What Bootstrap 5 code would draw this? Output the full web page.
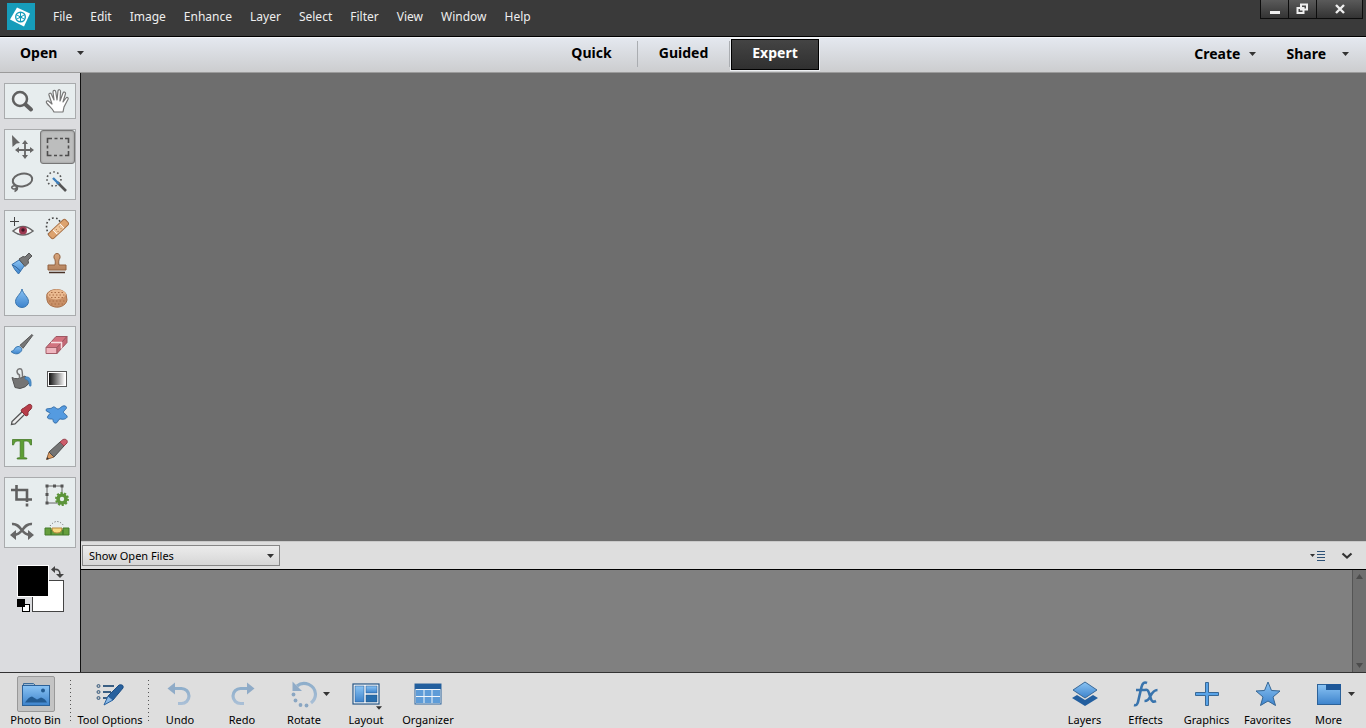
<!DOCTYPE html>
<html lang="en">
<head>
<meta charset="utf-8">
<meta name="viewport" content="width=device-width, initial-scale=1">
<title>Photo Editor</title>
<link href="https://cdn.jsdelivr.net/npm/bootstrap@5.3.0/dist/css/bootstrap.min.css" rel="stylesheet">
<style>
  body { font-family: "Noto Sans", "Open Sans", sans-serif; font-size: 11px; line-height: 16px; color: #000; background: #dedede; }
  button { border: 0; background: none; padding: 0; color: inherit; }
  svg { display: block; flex: none; }
  .titlebar { height: 37px; background: #3a3a3a; border-bottom: 1px solid #000; }
  .logo { margin: 3px 0 0 7px; }
  .menus { font-size: 12px; line-height: 18px; gap: 18px; padding: 8px 0 0 18px; }
  .menus a { color: #eee; text-decoration: none; }
  .winbtns { height: 19px; border: 1px solid #0c0c0c; border-top: 0; margin-right: 3px; }
  .winbtns button { width: 28px; background: linear-gradient(#5a5a5a, #333); border-left: 1px solid #0c0c0c; }
  .winbtns button:first-child { border-left: 0; width: 27px; }
  .winbtns button:last-child { width: 46px; }
  .modebar { height: 36px; background: linear-gradient(#e4e8ef, #cccdcf); border-top: 1px solid #f4f6f9; border-bottom: 1px solid #9b9b9b; font-size: 14px; font-weight: 700; padding-bottom: 2px; }
  .modebar .side { flex: 1 1 0; min-width: 0; }
  .open-btn { margin-left: 20px; gap: 20px; padding-bottom: 2px; }
  .create-btn { gap: 9px; margin-right: 30px; }
  .share-btn { gap: 16px; margin-right: 17px; }
  .mode { width: 92px; height: 26px; border-right: 1px solid #aaadb1; padding-bottom: 2px; }
  .mode.current { width: 88px; height: 31px; margin: 0 1px; color: #fff; background: linear-gradient(#444, #303030); border: 1px solid #000; box-shadow: 0 0 0 1px #eef0f3; }
  .toolbox { width: 81px; background: #dbdcdf; border-right: 1px solid #111; padding: 10px 4px 0; gap: 10px; }
  .toolset { display: grid; grid-template-columns: 1fr 1fr; grid-auto-rows: 34px; gap: 1px; border: 1px solid #a9abad; background: #e7edee; padding-right: 1px; }
  .toolset button { display: flex; align-items: center; justify-content: center; }
  .toolset .picked { background: #bcbdbd; border: 1px solid #777; border-radius: 3px; margin-right: -1px; box-shadow: inset 0 0 2px #888; }
  .swatches { margin: 7px 0 0 13px; }
  .canvas { background: #6e6e6e; }
  .binhead { height: 29px; background: #dedede; border-top: 1px solid #c9c9c9; border-bottom: 1px solid #000; padding: 0 13px 0 1px; }
  .files { width: 198px; height: 21px; appearance: none; border: 1px solid #868686; background: linear-gradient(#ececec, #d6d6d6); padding: 0 6px; font-size: 11px; line-height: 16px; color: #000; border-radius: 0; }
  .files-arrow { right: 6px; top: 9px; pointer-events: none; }
  .bin { height: 102px; background: #808080; }
  .scroller { width: 14px; background: #6f6f6f; border-left: 1px solid #555; padding: 4px 0; }
  .taskbar { height: 56px; background: #dedede; border-top: 1px solid #333; padding: 3px 7px 0 0; }
  .task { width: 62px; height: 52px; display: flex; flex-direction: column; align-items: center; white-space: nowrap; position: relative; }
  .task .pic { width: 38px; height: 36px; display: flex; align-items: center; justify-content: center; }
  .task.first { width: 71px; }
  .task.wide { width: 78px; }
  .task.right { width: 61px; }
  .task.on .pic { background: #c4c4c4; border: 1px solid #999; border-radius: 2px; }
  .dotted { background: repeating-linear-gradient(#555 0 1px, transparent 1px 4px) right 4px / 1px 44px no-repeat; }
  .drop { position: absolute; left: 50px; top: 16px; }
  .drop.low { left: 41px; top: 30px; }
</style>
</head>
<body class="vh-100 d-flex flex-column overflow-hidden">
<svg width="0" height="0" class="position-absolute" aria-hidden="true">
  <defs>
    <linearGradient id="blue" x2="0" y2="1"><stop stop-color="#8bc4f4"/><stop offset="1" stop-color="#3d83cc"/></linearGradient>
    <linearGradient id="pale" x2="0" y2="1"><stop stop-color="#8eaecb"/><stop offset="1" stop-color="#a9bfd6"/></linearGradient>
    <linearGradient id="ramp"><stop stop-color="#111"/><stop offset="1" stop-color="#fff"/></linearGradient>
    <linearGradient id="tan" x2="0" y2="1"><stop stop-color="#d9a67c"/><stop offset="1" stop-color="#b58460"/></linearGradient>
    <symbol id="tri" viewBox="0 0 7 4"><path d="M0 0h7L3.500 4z" fill="#333"/></symbol>
  </defs>
</svg>

<header class="titlebar d-flex align-items-start flex-shrink-0">
  <svg class="logo" width="28" height="28" viewBox="0 0 28 28"><rect width="28" height="27" fill="#169cba"/><path d="M10 4.500l13 6-6 13-14-7z" fill="#fff"/><circle cx="13.500" cy="14" r="4.800" fill="#fff" stroke="#169cba" stroke-width="1.400"/><path d="M13.500 9v10M9 11.500l9 5M18 11.500l-9 5" stroke="#169cba" stroke-width="1"/><circle cx="13.500" cy="14" r="1.500" fill="#169cba"/></svg>
  <nav class="menus d-flex flex-grow-1">
    <a href="#">File</a><a href="#">Edit</a><a href="#">Image</a><a href="#">Enhance</a><a href="#">Layer</a><a href="#">Select</a><a href="#">Filter</a><a href="#">View</a><a href="#">Window</a><a href="#">Help</a>
  </nav>
  <div class="winbtns d-flex">
    <button aria-label="Minimize"><svg class="m-auto" width="12" height="12"><path d="M1 9.500h10" stroke="#eee" stroke-width="3"/></svg></button>
    <button aria-label="Restore"><svg class="m-auto" width="13" height="12"><path d="M5 1.500h6v5H5zM1.500 5h6v5h-6z" fill="#484848" stroke="#eee" stroke-width="2"/></svg></button>
    <button aria-label="Close"><svg class="m-auto" width="12" height="12"><path d="M2 2l8 8M10 2l-8 8" stroke="#eee" stroke-width="2.400"/></svg></button>
  </div>
</header>

<div class="modebar d-flex align-items-center flex-shrink-0">
  <div class="side d-flex"><button class="open-btn d-flex align-items-center fw-bold">Open <svg width="7" height="4"><use href="#tri"/></svg></button></div>
  <div class="d-flex align-items-center">
    <button class="mode fw-bold">Quick</button><button class="mode fw-bold">Guided</button><button class="mode current fw-bold">Expert</button>
  </div>
  <div class="side d-flex justify-content-end">
    <button class="create-btn d-flex align-items-center fw-bold">Create <svg width="7" height="4"><use href="#tri"/></svg></button>
    <button class="share-btn d-flex align-items-center fw-bold">Share <svg width="7" height="4"><use href="#tri"/></svg></button>
  </div>
</div>

<main class="d-flex flex-grow-1">
  <aside class="toolbox d-flex flex-column flex-shrink-0">
    <div class="toolset">
      <button aria-label="Zoom"><svg width="24" height="24" fill="none" stroke="#606060"><circle cx="10" cy="10" r="7" fill="#eef2f3" stroke-width="2.500"/><path d="M15.500 15.500l5.500 5" stroke-width="4" stroke-linecap="round"/></svg></button>
      <button aria-label="Hand"><svg width="24" height="24"><path d="M9 23C8 20 5 18 2 14.500c-2-2.500 1-3.500 2.500-1.500l2.500 2L4 6c-.500-2 2-2.500 2.500-.500L9 11 8 3c0-2 2.500-2.200 2.800 0L12 11l1-9c.300-2 2.700-1.500 2.500.500L15 12l3-8c.600-1.800 3-1 2.400 1L18 13l3-4c1-1.500 2.700-.300 2 1.200L19 18l-1 5z" fill="#fff" stroke="#777" stroke-width="1.200" stroke-linejoin="round"/></svg></button>
    </div>
    <div class="toolset">
      <button aria-label="Move"><svg width="24" height="24"><path d="M2 0l8 8-3.500.5L2.500 12z" fill="#666"/><path d="M15 8v14M8 15h14" stroke="#666" stroke-width="1.800"/><path d="M15 5l3 4h-6zM15 24l3-4h-6zM5 15l4-3v6zM24 15l-4-3v6z" fill="#666"/></svg></button>
      <button class="picked" aria-label="Rectangular Marquee"><svg width="24" height="20"><path d="M1.500 6V1.500H6M8.500 1.500h3M14 1.500h3M19 1.500h3.500V6M22.500 8.500v3M22.500 14v4.500H19M16.500 18.500h-3M11 18.500H8M5.500 18.500h-4V14M1.500 11.500v-3" fill="none" stroke="#4d4d4d" stroke-width="1.600"/></svg></button>
      <button aria-label="Lasso"><svg width="24" height="24" fill="none" stroke="#666"><ellipse cx="12.500" cy="10" rx="9.800" ry="6.300" stroke-width="2" transform="rotate(-10 12.500 10)"/><path d="M7 16.500c-4-2-7 1-4 2.200 3 1 5-2 2.500-3M7 16.500c1 2-.500 4-2.500 5" stroke-width="1.600"/></svg></button>
      <button aria-label="Quick Selection"><svg width="24" height="24" fill="none"><circle cx="9" cy="9" r="7" stroke="#555" stroke-width="1.600" stroke-dasharray="1.600 2.400"/><path d="M12 12l9 9" stroke="#555" stroke-width="2.600"/><path d="M8 8l6 6" stroke="#3b7fbd" stroke-width="2.400"/></svg></button>
    </div>
    <div class="toolset">
      <button aria-label="Red Eye"><svg width="24" height="24"><path d="M4.500 1v9M0 5.500h9" stroke="#444"/><path d="M3 15q10-9 20 0-10 8-20 0z" fill="#f7f7f7" stroke="#666" stroke-width="1.600"/><circle cx="13" cy="14.500" r="4" fill="#9c3850"/><circle cx="13" cy="14" r="1.700" fill="#421826"/></svg></button>
      <button aria-label="Spot Healing"><svg width="24" height="24"><path d="M4 19C-1 10 2 2 9 2c3 0 5 1 6 4" fill="none" stroke="#444" stroke-width="1.600" stroke-dasharray="1.700 2.200"/><g transform="rotate(-43 13.500 13)"><rect x="2" y="9.500" width="23" height="7" rx="2" fill="#dda36f" stroke="#a66f45"/><path d="M9 10v6M18 10v6" stroke="#fff"/><rect x="9.500" y="10" width="8" height="6" fill="#efc79d"/><path d="M11 12h1M15 12h1M11 14.500h1M15 14.500h1" stroke="#a66f45"/></g></svg></button>
      <button aria-label="Smart Brush"><svg width="24" height="24"><path d="M2 13.500L9 9l5.500 5.500L8.500 23q-4-4-6.500-9.500z" fill="url(#blue)" stroke="#3973ad"/><path d="M2.500 14q3 1 8 6" fill="none" stroke="#2f6298"/><path d="M9 8l4-2.500 2 .5 4-4 3 3-4 4 .5 3-3.500 3.500z" fill="#777" stroke="#555"/></svg></button>
      <button aria-label="Clone Stamp"><svg width="24" height="24"><path d="M10 14c.5-3 .5-5-1-7-1-6 7-6 6 0-1.500 2-1.500 4-1 7h7v5H3v-5z" fill="url(#tan)" stroke="#936341"/><path d="M4 21.500h16" stroke="#493227" stroke-width="1.500"/></svg></button>
      <button aria-label="Blur"><svg width="24" height="24"><path d="M12 3c1 5 6.500 8 6.500 12.500a6.500 6 0 0 1-13 0C5.500 11 11 8 12 3z" fill="url(#blue)" stroke="#3b76af"/></svg></button>
      <button aria-label="Sponge"><svg width="24" height="24"><path d="M2 8c3-6 16-6 19 0l1 6c-1 6-9 9-15 6-4-1-6-6-5-12z" fill="#c99067" stroke="#a76e48"/><path d="M2.500 9c2-7 16-7 18.500-1-1 6-16 8-18.500 1z" fill="#eab98f"/><path d="M4 9h16M6 6.500h12M6 11.500h12M4 15h16M6 18h12" stroke="#a96d46" stroke-dasharray="1.500 2"/></svg></button>
    </div>
    <div class="toolset">
      <button aria-label="Brush"><svg width="24" height="24"><path d="M22 2.500l.8.800-9.800 13-3-3z" fill="#777" stroke="#555"/><path d="M1 19.500c4 0 3-5 7-5 3 0 5 3 3 5-3 4-8 2-10 0z" fill="url(#blue)" stroke="#3474ae"/></svg></button>
      <button aria-label="Eraser"><svg width="24" height="24"><path d="M1 15.500L11 4.500h11L12 15.500z" fill="#d2737f" stroke="#9e5863"/><path d="M1 15.500h11v6H1z" fill="#efb6bf" stroke="#a65e69"/><path d="M12 15.500l10-11v6l-10 11z" fill="#c36875" stroke="#9e5863"/><path d="M6 10.500h10.500v6" fill="none" stroke="#f6dfe2" stroke-width="1.500"/></svg></button>
      <button aria-label="Paint Bucket"><svg width="24" height="24"><path d="M2 10.500q5 3 13-1.500l5 6q-4 6-10 6.500l-5-1z" fill="#747474" stroke="#555"/><path d="M9.500 14V8Q7 7 7 4q1-3 4-2 1.500.5 1.500 8" fill="none" stroke="#777" stroke-width="1.500"/><path d="M15 10c4-1 7 2 6 9q-2 1-2-2c0-3-1-4-4-5z" fill="#4f91cc" stroke="#3474ae" stroke-width=".6"/></svg></button>
      <button aria-label="Gradient"><svg width="24" height="24"><rect x="2.500" y="4.500" width="19" height="15" fill="#fff" stroke="#555"/><rect x="4" y="6" width="16" height="12" fill="url(#ramp)"/></svg></button>
      <button aria-label="Color Picker"><svg width="24" height="24"><path d="M13 9l2.500 2.500L5 22l-3.500.5.500-3z" fill="#eee" stroke="#555" stroke-width="1.300"/><path d="M12 7l2-1 4-3c3-2 5 1 3 4l-3 3v3l-2 1-5-5z" fill="#b83d49" stroke="#8c3039"/></svg></button>
      <button aria-label="Custom Shape"><svg width="24" height="24"><path d="M7 6c2-3 4 1 6 1s4-4 7-3 1 3-1 5 2 3 3 5-3 4-6 3-3 5-6 4-1-4-3-4-6 0-4-3 2-2 2-3-4-1-4-3 4-1 6-2z" fill="#559be0" stroke="#346da8"/></svg></button>
      <button aria-label="Type"><svg width="24" height="24"><path d="M2.500 2.500h19V8H20.500q-1-4-3.500-4h-3.200v15.500q0 1.500 3 1.500v1H7.200v-1q3 0 3-1.500V4H7Q4.500 4 3.500 8h-1z" fill="#5e9e34" stroke="#467a27" stroke-width=".8"/></svg></button>
      <button aria-label="Pencil"><svg width="24" height="24"><path d="M1.500 22.500L4 15l5 5z" fill="#d99b61" stroke="#8d6240"/><path d="M4 15L15 5l4 4L9 20z" fill="#747474" stroke="#4d4d4d"/><path d="M15 5l3-2.500c3-1 5 1 4 3.500l-3 3z" fill="#cd5e6c" stroke="#99434e"/><path d="M1.500 22.500l.6-2.500 2 2z" fill="#333"/></svg></button>
    </div>
    <div class="toolset">
      <button aria-label="Crop"><svg width="24" height="24" fill="none" stroke="#606060" stroke-width="2.600"><path d="M6.500 2v14.500H22M1 7h16v12M17 20.500v3"/></svg></button>
      <button aria-label="Recompose"><svg width="24" height="24"><path d="M2 3h15v17H2z" fill="none" stroke="#666"/><path d="M.5 1.500h3v3h-3zM8 1.500h3v3H8zM15.500 1.500h3v3h-3zM.5 10h3v3h-3zM.5 18.500h3v3h-3z" fill="#555"/><circle cx="17" cy="16" r="5.500" fill="#5c9439" stroke="#5c9439" stroke-width="3" stroke-dasharray="1.900 1.500"/><circle cx="17" cy="16" r="5.500" fill="#5c9439"/><circle cx="17" cy="16" r="2.200" fill="#e7edee"/></svg></button>
      <button aria-label="Content-Aware Move"><svg width="24" height="24" fill="none" stroke="#666" stroke-width="2.600"><path d="M2 6c9-1 9 11 18 11M22 6C13 5 13 17 4 17"/><path d="M18 12l6 5-6 5zM6 12l-6 5 6 5z" fill="#666" stroke="none"/></svg></button>
      <button aria-label="Straighten"><svg width="26" height="24"><path d="M1 10h6v7H1zM19 10h6v7h-6zM7 12h12v5H7z" fill="#659e3c" stroke="#457a2c"/><path d="M8 10h10q0 5-5 5t-5-5z" fill="#f6d87f" stroke="#b88a40"/><path d="M6 8q7-9 14 0" fill="none" stroke="#555" stroke-dasharray="1 2"/></svg></button>
    </div>
    <button class="swatches align-self-start" aria-label="Foreground and background colors"><svg width="48" height="48"><rect x="15.500" y="15.500" width="31" height="31" fill="#fff" stroke="#444"/><rect x=".5" y=".5" width="31" height="31" fill="#000" stroke="#fff"/><rect x="5.500" y="39.500" width="7" height="7" fill="#fff" stroke="#000"/><path d="M0 34h8v8H0z"/><path d="M37 4.500q6-1 6 5" fill="none" stroke="#444" stroke-width="1.600"/><path d="M38 1v7l-4-3.500zM39 9h8l-4 4z" fill="#444"/></svg></button>
  </aside>

  <section class="d-flex flex-column flex-grow-1">
    <div class="canvas flex-grow-1"></div>
    <div class="binhead d-flex align-items-center justify-content-between">
      <div class="position-relative">
        <select class="files d-block" aria-label="Files shown in the bin"><option>Show Open Files</option></select>
        <svg class="files-arrow position-absolute" width="7" height="4"><use href="#tri"/></svg>
      </div>
      <div class="d-flex gap-3 align-items-center">
        <button aria-label="Bin options"><svg width="15" height="12"><path d="M0 4h5L2.500 7z" fill="#333"/><path d="M7 1.500h8M7 4.500h8M7 7.500h8M7 10.500h8" stroke="#2d5176"/></svg></button>
        <button aria-label="Collapse bin"><svg width="12" height="12"><path d="M1.500 3.500L6 7.500l4.500-4" fill="none" stroke="#333" stroke-width="2.200"/></svg></button>
      </div>
    </div>
    <div class="bin d-flex justify-content-end">
      <div class="scroller d-flex flex-column justify-content-between align-items-center">
        <svg width="7" height="5"><path d="M0 5h7L3.500 0z" fill="#4c4c4c"/></svg>
        <svg width="7" height="5"><path d="M0 0h7L3.500 5z" fill="#4c4c4c"/></svg>
      </div>
    </div>
  </section>
</main>

<footer class="taskbar d-flex flex-shrink-0">
  <button class="task first on dotted"><span class="pic"><svg width="30" height="26"><path d="M2.500 4.500v-2h10l2 2" fill="#9db9d2" stroke="#3b6b98"/><rect x="1.500" y="4.500" width="27" height="20" fill="url(#blue)" stroke="#2c6299"/><path d="M4 21.500q4-6 7-6l5 3 4-2q4 1 6 5z" fill="#235b92"/><circle cx="22" cy="9.500" r="2" fill="#235b92"/></svg></span>Photo Bin</button>
  <button class="task wide dotted"><span class="pic"><svg width="30" height="26"><path d="M8 5h11M8 11h8M8 17h5" stroke="#3a5f83" stroke-width="1.800"/><g fill="#bbb" stroke="#3a5f83"><circle cx="3.500" cy="5" r="1.500"/><circle cx="3.500" cy="11" r="1.500"/><circle cx="3.500" cy="17" r="1.500"/></g><path d="M13 15L24 4q5-1 4 3L18 19z" fill="#28619e" stroke="#1e4f84"/><path d="M13 15l5 4-9 5z" fill="#8bb9e6" stroke="#28619e"/></svg></span>Tool Options</button>
  <button class="task"><span class="pic"><svg width="28" height="28"><path d="M8 8.500h7.500a7.500 7.500 0 0 1 0 15H12" fill="none" stroke="url(#pale)" stroke-width="3.200"/><path d="M9 2.500v12L1.500 8.500z" fill="#8fabc7"/></svg></span>Undo</button>
  <button class="task"><span class="pic"><svg width="28" height="28"><path d="M20 8.500h-7.500a7.500 7.500 0 0 0 0 15H16" fill="none" stroke="url(#pale)" stroke-width="3.200"/><path d="M19 2.500v12l7.500-6z" fill="#8fabc7"/></svg></span>Redo</button>
  <button class="task"><span class="pic"><svg width="28" height="28"><path d="M7 6C14 0 25 5 25.500 14c0 4-2 7-4.500 9" fill="none" stroke="url(#pale)" stroke-width="3.200"/><path d="M2.500 1.500v9.500H12z" fill="#8fabc7"/><g fill="#8aa6c2"><circle cx="3.500" cy="14.500" r="1.900"/><circle cx="5.500" cy="20.500" r="1.900"/><circle cx="10.500" cy="25" r="1.900"/><circle cx="16.500" cy="25.500" r="1.900"/></g></svg></span>Rotate<svg class="drop" width="7" height="4"><use href="#tri"/></svg></button>
  <button class="task"><span class="pic"><svg width="28" height="24"><rect x="1" y="2" width="26" height="20" fill="#fff" stroke="#235484" stroke-width="1.200"/><rect x="3" y="4" width="9" height="16" fill="url(#blue)" stroke="#2c6299" stroke-width=".6"/><rect x="14" y="4" width="11" height="7" fill="url(#blue)" stroke="#2c6299" stroke-width=".6"/><rect x="14" y="13" width="11" height="7" fill="#286eae" stroke="#235484" stroke-width=".6"/></svg></span>Layout<svg class="drop low" width="6" height="4"><use href="#tri"/></svg></button>
  <button class="task me-auto"><span class="pic"><svg width="28" height="24"><rect x="1" y="2" width="26" height="20" fill="#f0f5fa" stroke="#2c6299"/><path d="M1 2h26v5H1z" fill="#225f9e"/><path d="M2 8h7.500v6H2zM10.500 8h7v6h-7zM18.500 8H26v6h-7.500zM2 15h7.500v6H2zM10.500 15h7v6h-7zM18.500 15H26v6h-7.500z" fill="#5e9cd8"/></svg></span>Organizer</button>

  <button class="task right"><span class="pic"><svg width="28" height="26"><path d="M1 17l5-3 8 5 8-5 5 3-13 8z" fill="#235f9f"/><path d="M14 1l12 8-12 8L2 9z" fill="url(#blue)" stroke="#396998"/></svg></span>Layers</button>
  <button class="task right"><span class="pic"><svg width="28" height="28" fill="none" stroke="#3974ad" stroke-width="2.600"><path d="M15 3q-4-2-5.500 4L6 22q-1 4-4 3M4 10h10M13 10q3-1 4 3l2 6q1 4 5 2M25.500 10q-4 0-7 6-2 5-6 5"/></svg></span>Effects</button>
  <button class="task right"><span class="pic"><svg width="26" height="26"><path d="M11.500 1.500h3v10h10v3h-10v10h-3v-10h-10v-3h10z" fill="#58a3e8" stroke="#386896"/></svg></span>Graphics</button>
  <button class="task right"><span class="pic"><svg width="26" height="26"><path d="M13 1l3.500 8.500 8.500.5-7 6 2.500 8.500L13 20l-7.500 4.500L8 16l-7-6 8.500-.5z" fill="url(#blue)" stroke="#356695"/></svg></span>Favorites</button>
  <button class="task right"><span class="pic"><svg width="26" height="24"><rect x="1.500" y="2.500" width="23" height="20" fill="url(#blue)" stroke="#2c6299"/><path d="M10 2h15v6H10z" fill="#1d5798"/></svg></span>More<svg class="drop" width="7" height="4"><use href="#tri"/></svg></button>
</footer>
<script src="https://cdn.jsdelivr.net/npm/bootstrap@5.3.0/dist/js/bootstrap.bundle.min.js"></script>
</body>
</html>
